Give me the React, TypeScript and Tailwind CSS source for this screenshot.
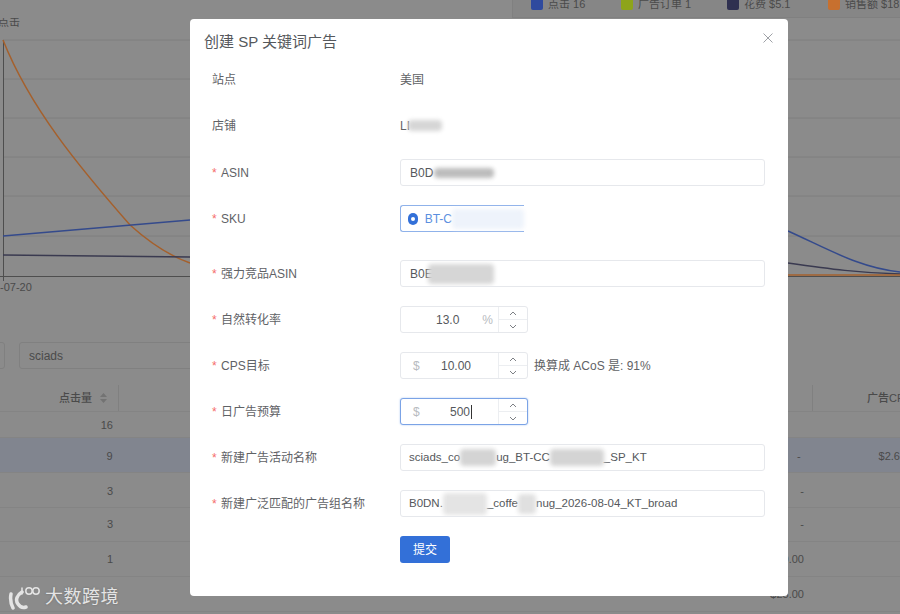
const cjk = "font-['Liberation_Sans','Noto_Sans_CJK_SC',sans-serif]";

function Row({ label, required, gap = "mb-[19px]", children }: { label: string; required?: boolean; gap?: string; children: React.ReactNode }) {
  return (
    <div className={`flex h-[27px] items-center ${gap}`}>
      <div className="w-[210px] shrink-0 pl-[22px] text-[12px] text-[#5f6266]">
        {required && <span className="inline-block w-[9px] text-[#f56c6c]">*</span>}
        {label}
      </div>
      {children}
    </div>
  );
}

function Blur({ className }: { className: string }) {
  return <span className={`shrink-0 rounded-sm blur-[2px] ${className}`} />;
}

function TextBox({ small, children }: { small?: boolean; children: React.ReactNode }) {
  return (
    <div className={`flex h-[27px] w-[365px] items-center overflow-hidden whitespace-nowrap rounded-[3px] border border-[#e6e8ec] bg-white text-[#55585c] ${small ? "pl-[8px] text-[11.5px]" : "pl-[9px] text-[12px]"}`}>
      {children}
    </div>
  );
}

function Stepper({ prefix, value, suffix, focused, caret }: { prefix?: string; value: string; suffix?: string; focused?: boolean; caret?: boolean }) {
  return (
    <div className={`flex h-[27px] w-[128px] rounded-[3px] border bg-white text-[12px] ${focused ? "border-[#7ba3e6] shadow-[0_0_2px_#a8c4f0]" : "border-[#e6e8ec]"}`}>
      <div className={`flex flex-1 items-center pl-[12px] ${suffix ? "pr-[5px]" : "pr-[9px]"}`}>
        {prefix && <span className="text-[#b8bbc0]">{prefix}</span>}
        <span className={`flex-1 text-right text-[#55585c] ${suffix ? "pr-[23px]" : caret ? "pr-[17px]" : "pr-[18px]"}`}>
          {value}
          {caret && <span className="ml-px inline-block h-[14px] w-px translate-y-[3px] bg-[#333]" />}
        </span>
        {suffix && <span className="text-[#b8bbc0]">{suffix}</span>}
      </div>
      <div className="flex w-[29px] flex-col border-l border-[#eceef1] text-[#7d8085]">
        <div className="flex flex-1 items-center justify-center border-b border-[#eceef1]">
          <svg width="8" height="5" viewBox="0 0 8 5" fill="none" stroke="currentColor"><path d="M1 4l3-3 3 3" /></svg>
        </div>
        <div className="flex flex-1 items-center justify-center">
          <svg width="8" height="5" viewBox="0 0 8 5" fill="none" stroke="currentColor"><path d="M1 1l3 3 3-3" /></svg>
        </div>
      </div>
    </div>
  );
}

function Chart() {
  return (
    <svg className="block" width="900" height="306" viewBox="0 0 900 306">
      {[22, 61, 100, 139, 178, 218].map((y) => (
        <line key={y} x1="3" x2="900" y1={y} y2={y} stroke="#7f7f7f" />
      ))}
      <path d="M3.500 22V258M0 258.500H900M3.500 258v5" stroke="#4e4e4e" fill="none" />
      <path d="M3 22C30 90 80 150 130 207C150 225 170 238 190 245" stroke="#a5602c" strokeWidth="1.500" fill="none" />
      <path d="M3 218L190 202" stroke="#344a8c" strokeWidth="1.500" fill="none" />
      <path d="M3 237L190 239" stroke="#3a3a50" strokeWidth="1.500" fill="none" />
      <path d="M788 213C830 232 860 250 900 254" stroke="#344a8c" strokeWidth="1.500" fill="none" />
      <path d="M788 245C830 251 860 255 900 256" stroke="#3a3a50" strokeWidth="1.500" fill="none" />
      <path d="M788 257H900" stroke="#a5602c" strokeWidth="1.500" fill="none" />
      <text x="-2" y="8" fontSize="11" fill="#4a4a4a">点击</text>
      <text x="0" y="273" fontSize="11" fill="#4a4a4a">-07-20</text>
    </svg>
  );
}

const cells = [
  { h: "h-[26px] pt-[2px]", click: "16", target: "", cpc: "", hi: false },
  { h: "h-[35px] pt-[2px]", click: "9", target: "-", cpc: "$2.6", hi: true },
  { h: "h-[35px] pt-[2px]", click: "3", target: "-", cpc: "", hi: false },
  { h: "h-[34px]", click: "3", target: "-", cpc: "", hi: false },
  { h: "h-[35px] pt-[1px]", click: "1", target: "$30.00", cpc: "", hi: false },
  { h: "h-[35px]", click: "", target: "$25.00", cpc: "", hi: false },
];

const legend = [
  { name: "点击 16", w: "w-[90px]", color: "bg-[#2f4a9e]" },
  { name: "广告订单 1", w: "w-[106px]", color: "bg-[#8ea41a]" },
  { name: "花费 $5.1", w: "w-[101px]", color: "bg-[#2f3050]" },
  { name: "销售额 $18", w: "w-[72px]", color: "bg-[#c7702f]" },
];

export default function App() {
  return (
    <div className={`relative h-[614px] w-[900px] overflow-hidden bg-[#8b8b8b] text-[11px] text-[#4a4a4a] ${cjk}`}>
      <div className="flex h-[18px] justify-end">
        <div className="h-[18px] w-[388px] overflow-hidden border-l border-b border-[#808080] bg-[#868686] pl-[18px]">
          <div className="flex h-[18px] -translate-y-[5px] items-center text-[11px]">
            {legend.map((l) => (
              <span key={l.name} className={`flex shrink-0 items-center gap-[5px] whitespace-nowrap ${l.w}`}>
                <i className={`h-[12px] w-[12px] rounded-[2px] ${l.color}`} />
                {l.name}
              </span>
            ))}
          </div>
        </div>
      </div>
      <Chart />

      <div className="mt-[18px] flex h-[27px] gap-[14px] text-[12px]">
        <div className="-ml-[20px] w-[25px] rounded-[3px] border border-[#808080]" />
        <div className="flex w-[300px] items-center rounded-[3px] border border-[#808080] pl-[9px]">sciads</div>
      </div>

      <div className="mt-[16px] flex h-[27px] border-b border-[#848484]">
        <div className="flex w-[119px] items-center justify-end gap-[8px] border-r border-[#808080] pr-[11px] font-medium">
          点击量
          <svg width="7" height="10" viewBox="0 0 7 10" fill="#737373"><path d="M3.500 0L7 4H0zM0 6h7L3.500 10z" /></svg>
        </div>
        <div className="flex flex-1 items-center justify-end pr-[96px]">目标</div>
        <div className="flex w-[88px] items-center border-l border-[#808080] font-medium">
          <span className="whitespace-nowrap pl-[54px]">广告CPC</span>
        </div>
      </div>
      {cells.map((c, i) => (
        <div key={i} className={`flex items-center border-b border-[#848484] ${c.h} ${c.hi ? "bg-[#81858f]" : ""}`}>
          <div className="w-[113px] text-right">{c.click}</div>
          <div className="w-[691px] text-right">{c.target}</div>
          <div className="flex-1 whitespace-nowrap pl-[78px]">{c.cpc}</div>
        </div>
      ))}

      <div className="absolute left-[8px] top-[584px] flex items-center gap-[5px] text-[#e4e4e4] [text-shadow:0_0_2px_#666]">
        <svg width="32" height="24" viewBox="0 0 32 24" fill="none" stroke="#e4e4e4" strokeLinecap="round">
          <path d="M3 8C2 13 3 18 5 22" strokeWidth="3.500" />
          <path d="M14 6C9 9 7 14 10 18C12 21 15 22 18 21" strokeWidth="3.500" />
          <path d="M14 2V8" strokeWidth="1.500" />
          <circle cx="21" cy="5" r="3.200" strokeWidth="1.500" />
          <circle cx="28" cy="5" r="3.200" strokeWidth="1.500" />
        </svg>
        <span className="text-[18px] tracking-[0.5px]">大数跨境</span>
      </div>

      <div className="absolute left-[190px] top-[19px] h-[577px] w-[598px] rounded-[4px] bg-white">
        <div className="flex h-[47px] items-center pl-[14px] text-[15px] text-[#55585c]">创建 SP 关键词广告</div>
        <svg className="absolute right-[15px] top-[14px]" width="10" height="10" viewBox="0 0 10 10" stroke="#9ea1a6"><path d="M.5.5l9 9M9.500.5l-9 9" /></svg>

        <Row label="站点"><span className="text-[12px] text-[#5f6266]">美国</span></Row>
        <Row label="店铺" gap="mb-[20px]">
          <span className="flex items-center text-[12px] text-[#5f6266]">LI<Blur className="-ml-[2px] h-[11px] w-[34px] bg-[#d6d6d6]" /></span>
        </Row>
        <Row label="ASIN" required>
          <TextBox>B0D<Blur className="ml-px h-[10px] w-[60px] bg-[#bcbcbc]" /></TextBox>
        </Row>
        <Row label="SKU" required gap="mb-[28px]">
          <div className="flex h-[27px] w-[124px] items-center gap-[7px] whitespace-nowrap rounded-l-[3px] border border-r-0 border-[#8fb2ea] pl-[7px] text-[12px] text-[#5b8fe0]">
            <span className="flex h-[12px] w-[12px] items-center justify-center rounded-full bg-[#3370d8]"><i className="h-[4px] w-[4px] rounded-full bg-white" /></span>
            <span className="flex items-center">BT-C<Blur className="h-[20px] w-[72px] bg-[#eef3fb]" /></span>
          </div>
        </Row>
        <Row label="强力竞品ASIN" required>
          <TextBox>B0E<Blur className="-ml-[5px] h-[20px] w-[66px] bg-[#d6d6d6]" /></TextBox>
        </Row>
        <Row label="自然转化率" required><Stepper value="13.0" suffix="%" /></Row>
        <Row label="CPS目标" required>
          <Stepper prefix="$" value="10.00" />
          <span className="ml-[6px] text-[12px] text-[#5f6266]">换算成 ACoS 是: 91%</span>
        </Row>
        <Row label="日广告预算" required><Stepper prefix="$" value="500" focused caret /></Row>
        <Row label="新建广告活动名称" required>
          <TextBox small>
            sciads_co<Blur className="h-[17px] w-[36px] bg-[#d4d4d4]" />ug_BT-CC<Blur className="h-[17px] w-[54px] bg-[#d4d4d4]" />_SP_KT
          </TextBox>
        </Row>
        <Row label="新建广泛匹配的广告组名称" required>
          <TextBox small>
            B0DN.<Blur className="h-[22px] w-[44px] bg-[#e4e4e4]" />_coffe<Blur className="h-[20px] w-[18px] bg-[#e0e0e0]" />nug_2026-08-04_KT_broad
          </TextBox>
        </Row>
        <div className="mt-px pl-[210px]">
          <button className="h-[27px] w-[50px] rounded-[3px] bg-[#3370d8] text-[12px] text-white">提交</button>
        </div>
      </div>
    </div>
  );
}
